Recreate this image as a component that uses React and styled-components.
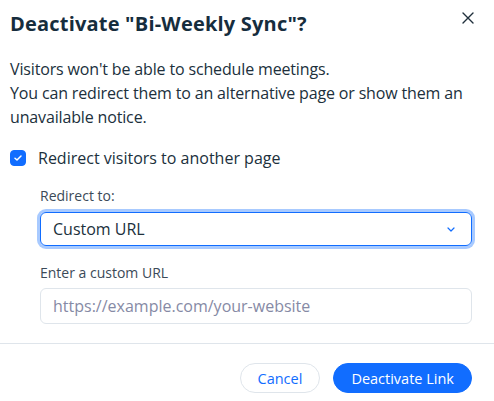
import React, { useState } from 'react';
import styled, { createGlobalStyle } from 'styled-components';

const GlobalStyle = createGlobalStyle`
    html, body {
        margin: 0;
        padding: 0;
        background: #ffffff;
    }
    body {
        font-family: "Open Sans", "Noto Sans", Arial, sans-serif;
        color: #20303c;
        -webkit-font-smoothing: antialiased;
    }
`;

export default function App() {
    const [redirect, setRedirect] = useState(true);

    return (
        <Modal>
            <GlobalStyle />
            <Header>
                <Title>Deactivate "Bi-Weekly Sync"?</Title>
                <CloseButton aria-label="Close">
                    <svg width="12" height="12" viewBox="0 0 12 12">
                        <path d="M1 1L11 11M11 1L1 11" stroke="#20303c" strokeWidth="1.4" strokeLinecap="round" />
                    </svg>
                </CloseButton>
            </Header>

            <Body>
                <Description>
                    Visitors won't be able to schedule meetings.
                    <br />
                    You can redirect them to an alternative page or show them an unavailable notice.
                </Description>

                <CheckRow onClick={() => setRedirect(!redirect)}>
                    <CheckBox checked={redirect}>
                        {redirect && (
                            <svg width="10" height="8" viewBox="0 0 10 8">
                                <path d="M2 4.2L4 6L8 2" fill="none" stroke="#fff" strokeWidth="1.5" strokeLinecap="round" strokeLinejoin="round" />
                            </svg>
                        )}
                    </CheckBox>
                    <CheckLabel>Redirect visitors to another page</CheckLabel>
                </CheckRow>

                <Fields>
                    <Field>
                        <FieldLabel>Redirect to:</FieldLabel>
                        <Select focused>
                            <span>Custom URL</span>
                            <svg width="8" height="5" viewBox="0 0 8 5">
                                <path d="M1 1L4 4L7 1" fill="none" stroke="#116dff" strokeWidth="1.2" strokeLinecap="round" strokeLinejoin="round" />
                            </svg>
                        </Select>
                    </Field>
                    <Field>
                        <FieldLabel>Enter a custom URL</FieldLabel>
                        <TextInput placeholder="https://example.com/your-website" />
                    </Field>
                </Fields>
            </Body>

            <Footer>
                <Button>Cancel</Button>
                <Button primary>Deactivate Link</Button>
            </Footer>
        </Modal>
    );
}

const Modal = styled.div`
    width: 494px;
    height: 401px;
    background: #ffffff;
    display: flex;
    flex-direction: column;
    box-sizing: border-box;
`;

const Header = styled.div`
    display: flex;
    justify-content: space-between;
    align-items: flex-start;
    padding: 11px 20px 0 10px;
`;

const Title = styled.h2`
    margin: 0;
    font-size: 20px;
    line-height: 26px;
    font-weight: 700;
    color: #162d3d;
    letter-spacing: 0.2px;
`;

const CloseButton = styled.button`
    border: none;
    background: none;
    padding: 0;
    margin-top: 1px;
    width: 12px;
    height: 12px;
    display: flex;
    cursor: pointer;
`;

const Body = styled.div`
    padding: 20px 22px 0 10px;
    flex: 1;
`;

const Description = styled.p`
    margin: 0;
    font-size: 16px;
    line-height: 24px;
    color: #20303c;
    letter-spacing: -0.15px;
`;

const CheckRow = styled.label`
    display: flex;
    align-items: center;
    gap: 12px;
    margin-top: 17px;
    cursor: pointer;
`;

const CheckBox = styled.span`
    width: 16px;
    height: 16px;
    border-radius: 4px;
    box-sizing: border-box;
    display: flex;
    align-items: center;
    justify-content: center;
    background: ${p => (p.checked ? '#116dff' : '#fff')};
    border: 1px solid ${p => (p.checked ? '#116dff' : '#acb4bd')};
`;

const CheckLabel = styled.span`
    font-size: 16px;
    line-height: 24px;
    color: #20303c;
`;

const Fields = styled.div`
    padding-left: 30px;
    margin-top: 17px;
    display: flex;
    flex-direction: column;
    gap: 17px;
`;

const Field = styled.div`
    display: flex;
    flex-direction: column;
    gap: 6px;
`;

const FieldLabel = styled.span`
    font-size: 14px;
    line-height: 18px;
    color: #3b4a58;
`;

const Select = styled.div`
    height: 34px;
    box-sizing: border-box;
    border-radius: 6px;
    border: 1px solid #116dff;
    box-shadow: ${p => (p.focused ? '0 0 0 3px #a8caff' : 'none')};
    display: flex;
    align-items: center;
    justify-content: space-between;
    padding: 0 16px 0 12px;
    font-size: 16px;
    color: #20303c;
    margin: 1px 0;
`;

const TextInput = styled.input`
    height: 36px;
    box-sizing: border-box;
    border-radius: 6px;
    border: 1px solid #dfe5eb;
    padding: 0 12px;
    font-family: inherit;
    font-size: 16px;
    color: #20303c;
    outline: none;
    &::placeholder {
        color: #868aa5;
    }
`;

const Footer = styled.div`
    border-top: 1px solid #dfe5eb;
    display: flex;
    justify-content: flex-end;
    gap: 13px;
    padding: 19px 22px 0 0;
    height: 58px;
    box-sizing: border-box;
`;

const Button = styled.button`
    height: 30px;
    border-radius: 15px;
    padding: 0 ${p => (p.primary ? '17px' : '17px')};
    font-family: inherit;
    font-size: 14.5px;
    cursor: pointer;
    background: ${p => (p.primary ? '#116dff' : '#ffffff')};
    color: ${p => (p.primary ? '#ffffff' : '#116dff')};
    border: 1px solid ${p => (p.primary ? '#116dff' : '#dfe5eb')};
`;
